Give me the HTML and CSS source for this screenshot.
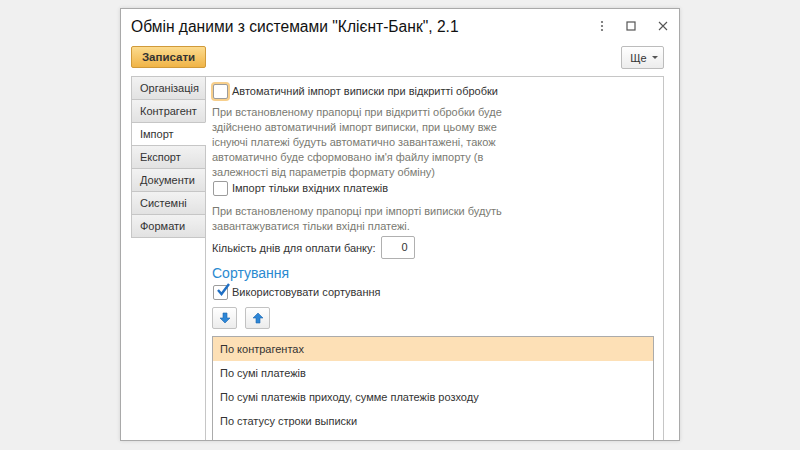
FILE: index.html
```html
<!DOCTYPE html>
<html lang="uk">
<head>
  <meta charset="UTF-8" />
  <title>Обмін даними з системами "Клієнт-Банк", 2.1</title>
  <link rel="stylesheet" href="styles.css">
</head>
<body>
  <div class="window">
    <div class="header">
      <div class="title">Обмін даними з системами "Клієнт-Банк", 2.1</div>
      <div class="win-icons">
        <svg width="4" height="12" viewBox="0 0 4 12"><circle cx="2" cy="2" r="1.1" fill="#666"/><circle cx="2" cy="6" r="1.1" fill="#666"/><circle cx="2" cy="10" r="1.1" fill="#666"/></svg>
        <svg width="10" height="10" viewBox="0 0 10 10"><rect x="1" y="1" width="8" height="8" fill="none" stroke="#555" stroke-width="1.2"/></svg>
        <svg width="10" height="10" viewBox="0 0 10 10"><path d="M1 1 L9 9 M9 1 L1 9" stroke="#555" stroke-width="1.1"/></svg>
      </div>
    </div>

    <div class="toolbar">
      <button class="btn-main">Записати</button>
      <button class="btn-more">Ще <span class="caret"></span></button>
    </div>

    <div class="tabs-area">
      <div class="tabs">
        <div class="tab">Організація</div>
        <div class="tab">Контрагент</div>
        <div class="tab active">Імпорт</div>
        <div class="tab">Експорт</div>
        <div class="tab">Документи</div>
        <div class="tab">Системні</div>
        <div class="tab">Формати</div>
      </div>

      <div class="panel">
        <label class="check-row first">
          <span class="checkbox focused"></span>
          Автоматичний імпорт виписки при відкритті обробки
        </label>
        <div class="hint">
          При встановленому прапорці при відкритті обробки буде<br>
          здійснено автоматичний імпорт виписки, при цьому вже<br>
          існуючі платежі будуть автоматично завантажені, також<br>
          автоматично буде сформовано ім'я файлу імпорту (в<br>
          залежності від параметрів формату обміну)
        </div>

        <label class="check-row">
          <span class="checkbox"></span>
          Імпорт тільки вхідних платежів
        </label>
        <div class="hint second">
          При встановленому прапорці при імпорті виписки будуть<br>
          завантажуватися тільки вхідні платежі.
        </div>

        <div class="field-row">
          <span>Кількість днів для оплати банку:</span>
          <div class="num-input">0</div>
        </div>

        <div class="group-title">Сортування</div>
        <label class="check-row sort">
          <span class="checkbox checked">
            <svg width="16" height="16" viewBox="0 0 16 16"><path d="M3 8 L6.5 12 L14 2" fill="none" stroke="#1f6fc4" stroke-width="2.4"/></svg>
          </span>
          Використовувати сортування
        </label>

        <div class="move-buttons">
          <button class="btn-icon">
            <svg width="12" height="12" viewBox="0 0 12 12"><path d="M4 1 H8 V6 H11 L6 11 L1 6 H4 Z" fill="#2d86d6" stroke="#1d66b0" stroke-width="0.6"/></svg>
          </button>
          <button class="btn-icon">
            <svg width="12" height="12" viewBox="0 0 12 12"><path d="M4 11 H8 V6 H11 L6 1 L1 6 H4 Z" fill="#2d86d6" stroke="#1d66b0" stroke-width="0.6"/></svg>
          </button>
        </div>

        <div class="list">
          <div class="list-row selected">По контрагентах</div>
          <div class="list-row">По сумі платежів</div>
          <div class="list-row">По сумі платежів приходу, сумме платежів розходу</div>
          <div class="list-row">По статусу строки выписки</div>
          <div class="list-row"></div>
        </div>
      </div>
    </div>
  </div>
</body>
</html>
```

FILE: styles.css
```css
body {
  margin: 0;
  padding: 8px 0 0 120px;
  background-color: #f0f0f0;
  font-family: 'Liberation Sans', Arial, sans-serif;
  overflow: hidden;
  height: 442px;
}

.window {
  width: 533px;
  height: 431px;
  padding: 0 15px 0 10px;
  background-color: #fff;
  border: 1px solid #a9a9a9;
  box-shadow: 0 0 4px rgba(0,0,0,0.12);
  overflow: hidden;
}

.header {
  height: 34px;
  display: flex;
  align-items: center;
  justify-content: space-between;
}

.title {
  font-size: 15.6px;
  color: #111;
  padding-top: 1px;
}

.win-icons {
  display: flex;
  align-items: center;
  gap: 22px;
  margin-right: -4px;
}

.toolbar {
  margin-top: 3px;
  display: flex;
  justify-content: space-between;
  align-items: flex-start;
}

button {
  font-family: 'Liberation Sans', Arial, sans-serif;
  cursor: pointer;
}

.btn-main {
  height: 22px;
  width: 75px;
  padding: 0;
  font-size: 11.5px;
  font-weight: bold;
  color: #333;
  background: linear-gradient(#fcdb8e, #f0b447);
  border: 1px solid #d09a3a;
  border-radius: 2px;
}

.btn-more {
  height: 23px;
  width: 43px;
  padding: 0 0 0 3px;
  font-size: 11px;
  color: #333;
  background: linear-gradient(#ffffff, #ececec);
  border: 1px solid #bcbcbc;
  border-radius: 2px;
  display: flex;
  align-items: center;
  justify-content: center;
  gap: 5px;
}

.caret {
  width: 0;
  height: 0;
  border-left: 3px solid transparent;
  border-right: 3px solid transparent;
  border-top: 3px solid #555;
}

.tabs-area {
  margin-top: 7px;
  display: flex;
  align-items: flex-start;
}

.tabs {
  width: 74px;
  display: flex;
  flex-direction: column;
}

.tab {
  height: 22px;
  line-height: 22px;
  padding-left: 8px;
  font-size: 11px;
  color: #333;
  background: linear-gradient(#f2f2f2, #e2e2e2);
  border: 1px solid #c6c6c6;
  border-bottom: none;
  margin-right: -1px;
}

.tab:last-child {
  border-bottom: 1px solid #c6c6c6;
}

.tab.active {
  position: relative;
  background: #fff;
  border-right-color: #fff;
}

.panel {
  flex: 1;
  height: 380px;
  border: 1px solid #c6c6c6;
  border-bottom: none;
  padding: 6px 9px 0 6px;
  color: #333;
  font-size: 11px;
}

.check-row {
  display: flex;
  align-items: center;
  gap: 4px;
  height: 16px;
  white-space: nowrap;
}

.checkbox {
  width: 13px;
  height: 13px;
  border: 1px solid #9c9c9c;
  border-radius: 2px;
  background: #fff;
  display: flex;
  align-items: center;
  justify-content: center;
  margin-left: 1px;
}

.checkbox.focused {
  box-shadow: 0 0 0 2px #f7cf8c;
}

.checkbox svg {
  margin: -4px -4px 0 0;
}

.hint {
  margin-top: 6px;
  line-height: 15px;
  color: #7a7a72;
  white-space: nowrap;
}

.hint.second {
  margin-top: 8px;
}

.field-row {
  margin-top: 2px;
  display: flex;
  align-items: center;
  gap: 5px;
}

.num-input {
  width: 26px;
  height: 21px;
  line-height: 21px;
  border: 1px solid #b0b0b0;
  border-radius: 2px;
  text-align: right;
  padding-right: 6px;
  color: #333;
}

.group-title {
  margin-top: 5px;
  font-size: 14px;
  line-height: 18px;
  color: #2a8ad0;
}

.check-row.sort {
  margin-top: 2px;
}

.move-buttons {
  margin-top: 7px;
  display: flex;
  gap: 8px;
}

.btn-icon {
  width: 25px;
  height: 22px;
  padding: 0;
  background: linear-gradient(#ffffff, #ececec);
  border: 1px solid #c2c2c2;
  border-radius: 2px;
  display: flex;
  align-items: center;
  justify-content: center;
}

.list {
  margin-top: 7px;
  border: 1px solid #ababab;
  border-bottom: none;
}

.list-row {
  height: 24px;
  line-height: 24px;
  padding-left: 7px;
  color: #333;
}

.list-row.selected {
  background-color: #fde0b6;
}
```
